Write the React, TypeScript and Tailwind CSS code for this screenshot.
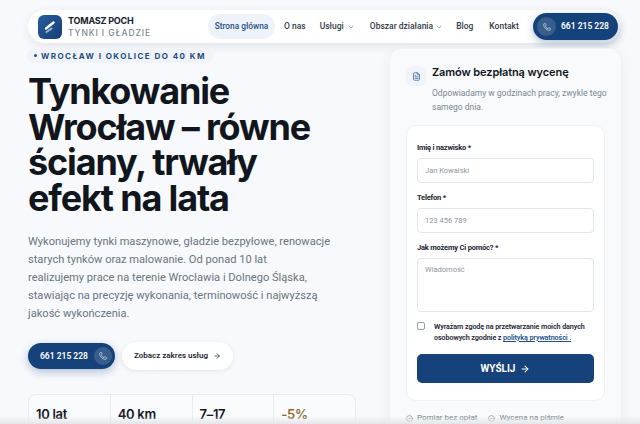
import { ChevronDown, Phone, ArrowRight, FileText, CircleCheck } from "lucide-react";

const body = "font-['Roboto',sans-serif]";
const head = "font-['Inter',sans-serif]";
const form = "font-['Roboto',sans-serif]";
const navItem = "shrink-0 whitespace-nowrap text-[8.5px] font-medium text-[#323b47]";

function Field({ label, placeholder }: { label: string; placeholder: string }) {
  return (
    <div className="flex flex-col">
      <div className="h-[11px] text-[7.5px] leading-[11px] font-bold tracking-[-0.2px] text-[#1b2430]">{label}</div>
      <div className="mt-[5px] flex h-[25px] items-center rounded-[4px] border border-[#e2e6ec] bg-white pl-[7px] text-[7.5px] text-[#8f959c]">{placeholder}</div>
    </div>
  );
}

function Stat({ value, amber }: { value: string; amber?: boolean }) {
  return (
    <div className={`flex-1 border-r border-[#e8ecf2] pl-[7px] pt-[11px] text-[13px] leading-[16px] font-semibold tracking-[-0.3px] last:border-r-0 ${head} ${amber ? "text-[#8a6a2f]" : "text-[#12171f]"}`}>
      {value}
    </div>
  );
}

export default function App() {
  return (
    <div className={`relative h-[424px] w-[640px] overflow-hidden bg-[#f7f9fc] ${body}`}>
      <div className="pl-[28px] pr-[20px] pt-[10px]">
        <nav className="flex h-[33px] items-center rounded-full bg-white pl-[10px] pr-[2px] shadow-[0_3px_10px_rgba(30,50,80,0.10)]">
          <div className="flex h-[24px] w-[24px] shrink-0 items-center justify-center rounded-[6px] bg-gradient-to-br from-[#2a5fa0] to-[#143f75]">
            <svg width="16" height="16" viewBox="0 0 16 16">
              <path d="M4 9.5 L11.5 3.5" stroke="#fff" strokeWidth="2.4" strokeLinecap="round" />
              <path d="M4.5 13 L9.5 9.5" stroke="#9db7d8" strokeWidth="2" strokeLinecap="round" />
            </svg>
          </div>
          <div className="ml-[6px] flex w-[90px] shrink-0 flex-col whitespace-nowrap">
            <span className={`text-[9px] leading-[12px] font-bold tracking-[-0.2px] text-[#15202e] ${head}`}>TOMASZ POCH</span>
            <span className={`text-[8.5px] leading-[12px] font-medium tracking-[0.9px] text-[#7d8793] ${head}`}>TYNKI I GŁADZIE</span>
          </div>
          <div className="ml-[50px] flex h-[25px] w-[67px] shrink-0 items-center justify-center rounded-full bg-[#eef3f9] text-[8.3px] font-medium whitespace-nowrap text-[#1f4f86]">Strona główna</div>
          <span className={`ml-[9px] ${navItem}`}>O nas</span>
          <span className={`ml-[14px] ${navItem}`}>Usługi</span>
          <ChevronDown className="ml-[3px] shrink-0 text-[#7d8793]" size={8} />
          <span className={`ml-[15px] ${navItem}`}>Obszar działania</span>
          <ChevronDown className="ml-[2px] shrink-0 text-[#7d8793]" size={8} />
          <span className={`ml-[13px] ${navItem}`}>Blog</span>
          <span className={`ml-[16px] ${navItem}`}>Kontakt</span>
          <div className="ml-auto flex h-[27px] w-[85px] shrink-0 items-center rounded-full bg-[#15427a] pl-[4px] shadow-[0_3px_8px_rgba(20,60,110,0.3)]">
            <span className="flex h-[19px] w-[19px] items-center justify-center rounded-full bg-white/15">
              <Phone size={8} className="text-[#dbe6f3]" />
            </span>
            <span className="ml-[5px] text-[8.5px] font-semibold whitespace-nowrap text-white">661 215 228</span>
          </div>
        </nav>

        <main className="mt-[5px] -mr-[2px] flex items-start justify-between">
          <section className="flex w-[330px] flex-col items-start">
            <div className={`-ml-[1px] flex h-[15px] items-center rounded-full bg-[#f0f4f9] px-[7px] text-[8px] font-bold tracking-[1.45px] whitespace-nowrap text-[#244d80] ${head}`}>
              <span className="mr-[4px] h-[3px] w-[3px] rounded-full bg-[#244d80]"></span>
              WROCŁAW I OKOLICE DO 40 KM
            </div>
            <h1 className={`mt-[11px] text-[36px] leading-[35.5px] font-bold tracking-[-1.15px] whitespace-nowrap text-[#11161d] ${head}`}>
              Tynkowanie<br />Wrocław – równe<br />ściany, trwały<br />efekt na lata
            </h1>
            <p className="mt-[17px] w-[340px] text-[11.1px] leading-[18px] whitespace-nowrap text-[#6a7480]">
              Wykonujemy tynki maszynowe, gładzie bezpyłowe, renowacje<br />
              starych tynków oraz malowanie. Od ponad 10 lat<br />
              realizujemy prace na terenie Wrocławia i Dolnego Śląska,<br />
              stawiając na precyzję wykonania, terminowość i najwyższą<br />
              jakość wykończenia.
            </p>
            <div className="mt-[19px] flex items-center gap-[7px]">
              <div className="flex h-[26px] w-[87px] items-center rounded-full bg-[#15427a] pl-[12px] shadow-[0_3px_8px_rgba(20,60,110,0.3)]">
                <span className="text-[8.5px] font-semibold whitespace-nowrap text-white">661 215 228</span>
                <span className="ml-[6px] flex h-[18px] w-[18px] shrink-0 items-center justify-center rounded-full bg-white/15">
                  <Phone size={8} className="text-[#dbe6f3]" />
                </span>
              </div>
              <div className="flex h-[28px] w-[111px] items-center justify-center rounded-full bg-white text-[8px] font-semibold whitespace-nowrap text-[#1c2530] shadow-[0_1px_4px_rgba(30,50,80,0.10)]">
                Zobacz zakres usług
                <ArrowRight size={8} className="ml-[5px]" />
              </div>
            </div>
            <div className="mt-[24px] flex h-[60px] w-[328px] rounded-[8px] border border-[#e8ecf2] bg-[#fafbfd]">
              <Stat value="10 lat" />
              <Stat value="40 km" />
              <Stat value="7–17" />
              <Stat value="-5%" amber />
            </div>
          </section>

          <aside className="w-[233px] rounded-[12px] border border-[#eef1f6] bg-[#f8fafc] px-[16px] pt-[16px] shadow-[0_4px_16px_rgba(30,50,80,0.05)]">
            <div className="flex">
              <span className="mt-[1px] flex h-[20px] w-[20px] shrink-0 items-center justify-center rounded-[7px] bg-[#f0f4f9]">
                <FileText size={9} className="text-[#3c6597]" />
              </span>
              <div className="ml-[6px]">
                <div className={`text-[11px] leading-[14px] font-semibold tracking-[-0.1px] whitespace-nowrap text-[#11161d] ${head}`}>Zamów bezpłatną wycenę</div>
                <div className="mt-[7px] w-[175px] text-[8.5px] leading-[14px] text-[#7c8691]">Odpowiadamy w godzinach pracy, zwykle tego samego dnia.</div>
              </div>
            </div>
            <div className={`mt-[11px] rounded-[10px] border border-[#eef1f6] bg-white px-[10px] pt-[16px] pb-[17px] ${form}`}>
              <div className="flex flex-col gap-[9px]">
                <Field label="Imię i nazwisko *" placeholder="Jan Kowalski" />
                <Field label="Telefon *" placeholder="123 456 789" />
                <div className="flex flex-col">
                  <div className="h-[11px] text-[7.5px] leading-[11px] font-bold tracking-[-0.2px] text-[#1b2430]">Jak możemy Ci pomóc? *</div>
                  <div className="mt-[5px] h-[54px] rounded-[4px] border border-[#e2e6ec] pl-[7px] pt-[5px] text-[7.5px] text-[#8f959c]">Wiadomość</div>
                </div>
              </div>
              <div className="mt-[9px] flex">
                <span className="mt-[1px] h-[8px] w-[8px] shrink-0 rounded-[2px] border border-[#9aa1aa]"></span>
                <span className="ml-[9px] text-[7.2px] leading-[11px] font-semibold tracking-[-0.1px] text-[#1b2430]">
                  Wyrażam zgodę na przetwarzanie moich danych osobowych zgodnie z <span className="text-[#1f4f86] underline">polityką prywatności .</span>
                </span>
              </div>
              <div className="mt-[11px] flex h-[29px] items-center justify-center rounded-[5px] bg-[#15427a] text-[10px] font-bold text-white">
                WYŚLIJ <ArrowRight size={10} strokeWidth={2.5} className="ml-[5px]" />
              </div>
            </div>
            <div className="mt-[11px] flex gap-[11px] pb-[10px] text-[8px] text-[#6f7a86]">
              <span className="flex items-center gap-[4px] whitespace-nowrap"><CircleCheck size={7} />Pomiar bez opłat</span>
              <span className="flex items-center gap-[4px] whitespace-nowrap"><CircleCheck size={7} />Wycena na piśmie</span>
            </div>
          </aside>
        </main>
      </div>
      <div className="absolute inset-x-0 bottom-0 h-[8px] bg-gradient-to-b from-transparent to-[#e4e6e9]"></div>
    </div>
  );
}
